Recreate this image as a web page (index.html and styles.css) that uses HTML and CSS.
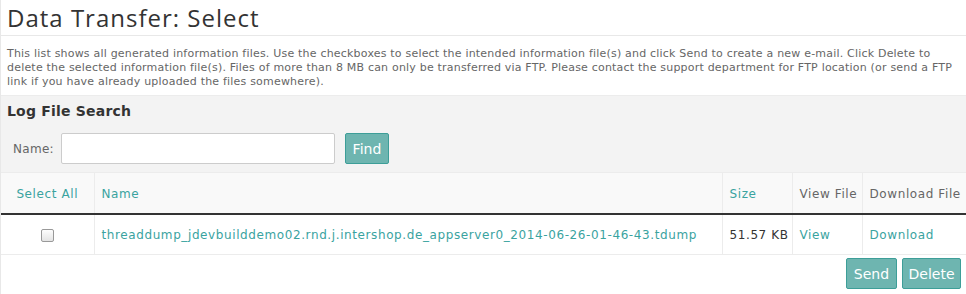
FILE: index.html
```html
<!DOCTYPE html>
<html>
<head>
<meta charset="utf-8">
<link rel="stylesheet" href="styles.css">
</head>
<body>
<div class="page">
  <h1 class="title">Data Transfer: Select</h1>
  <div class="desc">
    <p>This list shows all generated information files. Use the checkboxes to select the intended information file(s) and click Send to create a new e-mail. Click Delete to delete the selected information file(s). Files of more than 8 MB can only be transferred via FTP. Please contact the support department for FTP location (or send a FTP link if you have already uploaded the files somewhere).</p>
  </div>
  <div class="search">
    <h2 class="search-title">Log File Search</h2>
    <div class="search-row">
      <label class="search-label">Name:</label>
      <input class="search-input" type="text">
      <button class="btn btn-find">Find</button>
    </div>
  </div>
  <table class="files">
    <colgroup>
      <col class="w-sel">
      <col class="w-name">
      <col class="w-size">
      <col class="w-view">
      <col class="w-dl">
    </colgroup>
    <thead>
      <tr>
        <th class="c-sel"><a href="#" class="link">Select All</a></th>
        <th><a href="#" class="link">Name</a></th>
        <th><a href="#" class="link">Size</a></th>
        <th>View File</th>
        <th>Download File</th>
      </tr>
    </thead>
    <tbody>
      <tr>
        <td class="c-sel"><span class="check"></span></td>
        <td><a href="#" class="link">threaddump_jdevbuilddemo02.rnd.j.intershop.de_appserver0_2014-06-26-01-46-43.tdump</a></td>
        <td class="size">51.57&nbsp;KB</td>
        <td><a href="#" class="link">View</a></td>
        <td><a href="#" class="link">Download</a></td>
      </tr>
    </tbody>
  </table>
  <div class="actions">
    <button class="btn btn-send">Send</button>
    <button class="btn btn-delete">Delete</button>
  </div>
</div>
</body>
</html>
```
FILE: styles.css
```css
html, body {
  margin: 0;
  padding: 0;
  background: #fff;
}
body {
  font-family: "DejaVu Sans", Verdana, sans-serif;
  font-size: 11px;
  color: #666;
}
.page {
  border-left: 1px solid #e8e8e8;
  min-height: 294px;
}
.title {
  margin: 0;
  padding: 2px 6px 0;
  height: 33px;
  font-family: "Open Sans", sans-serif;
  font-weight: 400;
  font-size: 24px;
  letter-spacing: 1px;
  line-height: 32px;
  color: #333;
  border-bottom: 1px solid #e8e8e8;
}
.desc {
  padding: 11px 6px 6px;
}
.desc p {
  margin: 0;
  line-height: 14px;
  letter-spacing: 0.2px;
}
.search {
  background: #f3f3f3;
  padding: 6px 6px 8px;
  border-top: 1px solid #ececec;
}
.search-title {
  margin: 0;
  font-size: 14px;
  font-weight: bold;
  letter-spacing: 0.2px;
  color: #333;
  line-height: 18px;
}
.search-row {
  display: flex;
  align-items: center;
  margin-top: 13px;
  padding-left: 6px;
}
.search-label {
  font-size: 12px;
  letter-spacing: 0.3px;
  color: #666;
  margin-right: 7px;
}
.search-input {
  width: 274px;
  height: 31px;
  box-sizing: border-box;
  border: 1px solid #ccc;
  border-radius: 2px;
  background: #fff;
  margin: 0 10px 0 0;
  padding: 0;
}
.btn {
  font-family: "DejaVu Sans", Verdana, sans-serif;
  font-size: 14px;
  color: #fff;
  background: #6eb5b0;
  border: 1px solid #3d9e98;
  border-radius: 2px;
  height: 31px;
  padding: 0;
  margin: 0;
  cursor: pointer;
}
.btn-find { width: 44px; }
.btn-send { width: 51px; }
.btn-delete { width: 59px; }
.files {
  width: 100%;
  border-collapse: collapse;
  table-layout: fixed;
}
.w-sel { width: 93px; }
.w-size { width: 70px; }
.w-view { width: 70px; }
.w-dl { width: 104px; }
.files th, .files td {
  padding: 0 7px;
  text-align: left;
  border-left: 1px solid #ececec;
  font-size: 12px;
  letter-spacing: 0.6px;
  white-space: nowrap;
  overflow: hidden;
}
.files th:first-child, .files td:first-child {
  border-left: none;
}
.files thead th {
  height: 39px;
  padding-top: 1px;
  background: #f9f9f9;
  font-weight: normal;
  color: #666;
  border-top: 1px solid #ececec;
  border-bottom: 2px solid #333;
}
.files tbody td {
  border-bottom: 1px solid #ececec;
  height: 39px;
}
.files .c-sel {
  text-align: center;
}
.link {
  color: #3aa39f;
  text-decoration: none;
}
.size {
  color: #333;
}
.check {
  display: inline-block;
  width: 11px;
  height: 11px;
  border: 1px solid #999;
  border-radius: 2px;
  background: linear-gradient(#fdfdfd, #e4e4e4);
  vertical-align: middle;
}
.actions {
  display: flex;
  justify-content: flex-end;
  gap: 5px;
  padding: 3px 5px 0;
}
```
